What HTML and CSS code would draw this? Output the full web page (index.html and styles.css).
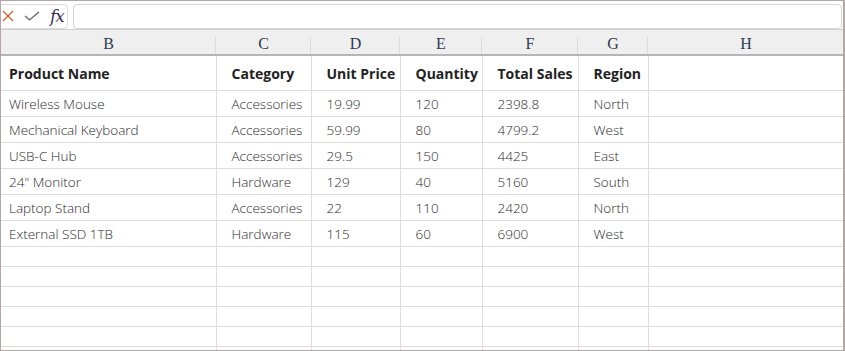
FILE: index.html
```html
<!DOCTYPE html>
<html lang="en">
<head>
    <meta charset="UTF-8">
    <title>Sheet</title>
    <link rel="stylesheet" href="styles.css">
</head>
<body>
    <div class="frame">
        <div class="formula-bar">
            <div class="fx-tools">
                <svg class="icon" width="12" height="12" viewBox="0 0 12 12">
                    <path d="M1 1 L11 11 M11 1 L1 11" stroke="#c8602e" stroke-width="1.3" fill="none"/>
                </svg>
                <svg class="icon" width="16" height="10" viewBox="0 0 16 10">
                    <path d="M1 5 L5.5 9 L15 1" stroke="#5b6670" stroke-width="1.3" fill="none"/>
                </svg>
                <span class="fx">fx</span>
            </div>
            <div class="formula-input"></div>
        </div>
        <table class="sheet">
            <colgroup>
                <col style="width:215px">
                <col style="width:95px">
                <col style="width:89px">
                <col style="width:82px">
                <col style="width:96px">
                <col style="width:70px">
                <col>
            </colgroup>
            <thead>
                <tr class="letters">
                    <th>B</th><th>C</th><th>D</th><th>E</th><th>F</th><th>G</th><th>H</th>
                </tr>
            </thead>
            <tbody>
                <tr class="head-row">
                    <td>Product Name</td><td>Category</td><td>Unit Price</td><td>Quantity</td><td>Total Sales</td><td>Region</td><td></td>
                </tr>
                <tr><td>Wireless Mouse</td><td>Accessories</td><td>19.99</td><td>120</td><td>2398.8</td><td>North</td><td></td></tr>
                <tr><td>Mechanical Keyboard</td><td>Accessories</td><td>59.99</td><td>80</td><td>4799.2</td><td>West</td><td></td></tr>
                <tr><td>USB-C Hub</td><td>Accessories</td><td>29.5</td><td>150</td><td>4425</td><td>East</td><td></td></tr>
                <tr><td>24" Monitor</td><td>Hardware</td><td>129</td><td>40</td><td>5160</td><td>South</td><td></td></tr>
                <tr><td>Laptop Stand</td><td>Accessories</td><td>22</td><td>110</td><td>2420</td><td>North</td><td></td></tr>
                <tr><td>External SSD 1TB</td><td>Hardware</td><td>115</td><td>60</td><td>6900</td><td>West</td><td></td></tr>
                <tr class="empty"><td></td><td></td><td></td><td></td><td></td><td></td><td></td></tr>
                <tr class="empty"><td></td><td></td><td></td><td></td><td></td><td></td><td></td></tr>
                <tr class="empty"><td></td><td></td><td></td><td></td><td></td><td></td><td></td></tr>
                <tr class="empty"><td></td><td></td><td></td><td></td><td></td><td></td><td></td></tr>
                <tr class="empty"><td></td><td></td><td></td><td></td><td></td><td></td><td></td></tr>
                <tr class="empty"><td></td><td></td><td></td><td></td><td></td><td></td><td></td></tr>
            </tbody>
        </table>
    </div>
</body>
</html>
```

FILE: styles.css
```css
html, body {
    margin: 0;
    padding: 0;
    background: #fff;
    overflow: hidden;
}
.frame {
    width: 845px;
    height: 351px;
    box-sizing: border-box;
    border: 1px solid #b3a6a6;
    border-right-width: 2px;
    overflow: hidden;
    font-family: "Open Sans", "Noto Sans", sans-serif;
}
.formula-bar {
    display: flex;
    align-items: center;
    gap: 5px;
    height: 28px;
    padding: 2px 1px 0 0;
    box-sizing: border-box;
}
.fx-tools {
    display: flex;
    align-items: center;
    gap: 10px;
    height: 25px;
    width: 78px;
    margin-left: -11px;
    padding-left: 11px;
    box-sizing: border-box;
    border: 1px solid #dcdcdc;
    border-radius: 4px;
}
.icon {
    display: block;
}
.fx {
    font-family: "DejaVu Serif", "Liberation Serif", serif;
    font-style: italic;
    font-size: 17px;
    color: #3c2c55;
    letter-spacing: -1px;
}
.formula-input {
    flex: 1;
    height: 25px;
    border: 1px solid #d4d4d4;
    border-radius: 4px;
    box-sizing: border-box;
}
.sheet {
    border-collapse: collapse;
    table-layout: fixed;
    width: 843px;
}
.letters th {
    height: 24px;
    padding: 0;
    background: #eeefee;
    border-top: 1px solid #cfcfcf;
    border-bottom: 2px solid #b5b5b5;
    font-family: "Liberation Serif", "DejaVu Serif", serif;
    font-weight: normal;
    font-size: 16px;
    color: #2f3a52;
    text-align: center;
    vertical-align: bottom;
    line-height: 20px;
    background-image: linear-gradient(#dcdcdc, #dcdcdc);
    background-size: 1px 17px;
    background-position: right bottom;
    background-repeat: no-repeat;
}
.letters th:last-child {
    background-image: none;
}
.sheet td {
    height: 25px;
    padding: 0 0 0 15px;
    border-right: 1px solid #dddddd;
    border-bottom: 1px solid #dddddd;
    font-size: 13.5px;
    font-weight: 300;
    color: #2c2c2c;
    white-space: nowrap;
    overflow: hidden;
}
.sheet td:first-child {
    padding-left: 8px;
}
.sheet td:last-child {
    border-right: none;
}
.head-row td {
    height: 34px;
    font-weight: 700;
    font-size: 14px;
    color: #222;
}
.empty td {
    height: 19px;
}
```
